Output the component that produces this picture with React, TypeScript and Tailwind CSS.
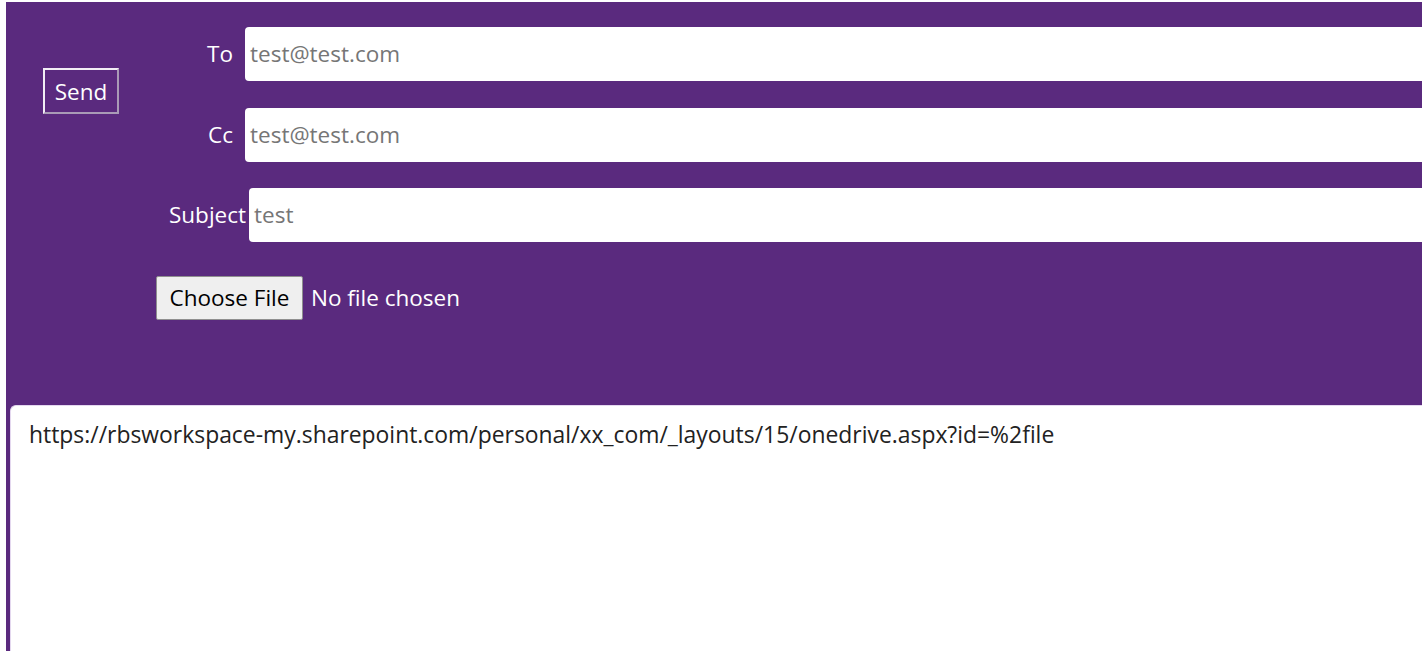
import React from "react";

export default function App() {
  const font = { fontFamily: '"Open Sans", "Noto Sans", sans-serif' };
  return (
    <div className="h-[651px] w-[1422px] overflow-hidden bg-white pl-[6px] pt-[2px]" style={font}>
      <div className="h-[700px] bg-[#5a2a7e] overflow-hidden">
        <div className="flex h-[403px]">
          <div className="w-[150px] shrink-0">
            <button className="ml-[37px] mt-[66px] flex h-[46px] w-[76px] items-center justify-center border-2 border-t-[#f2eef5] border-l-[#f2eef5] border-r-[#a99bb6] border-b-[#a99bb6] pt-[2px] text-[22.5px] leading-none text-white">
              Send
            </button>
          </div>
          <div className="flex flex-1 flex-col pt-[25px]">
            <div className="flex items-center">
              <div className="w-[77px] shrink-0 text-right text-[22.5px] text-white">To</div>
              <div className="ml-[12px] flex h-[54px] flex-1 items-center rounded-l-[4px] bg-white pl-[5px] text-[22.5px] text-[#767676]">
                test@test.com
              </div>
            </div>
            <div className="mt-[27px] flex items-center">
              <div className="w-[77px] shrink-0 text-right text-[22.5px] text-white">Cc</div>
              <div className="ml-[12px] flex h-[54px] flex-1 items-center rounded-l-[4px] bg-white pl-[5px] text-[22.5px] text-[#767676]">
                test@test.com
              </div>
            </div>
            <div className="mt-[26px] flex items-center">
              <div className="w-[90px] shrink-0 text-right text-[22.5px] text-white">Subject</div>
              <div className="ml-[3px] flex h-[54px] flex-1 items-center rounded-l-[4px] bg-white pl-[5px] text-[22.5px] text-[#767676]">
                test
              </div>
            </div>
            <div className="mt-[34px] flex items-center">
              <div className="flex h-[44px] w-[147px] items-center justify-center rounded-[2px] border border-[#8f8f8f] bg-[#efefef] text-[22.5px] text-black">
                Choose File
              </div>
              <div className="ml-[8px] text-[22.5px] text-white">No file chosen</div>
            </div>
          </div>
        </div>
        <div className="ml-[4px] h-[300px] rounded-tl-[6px] border border-r-0 border-[#e4d8ef] bg-white pl-[18px] pt-[12px] text-[22.9px] text-[#222222]">
          https://rbsworkspace-my.sharepoint.com/personal/xx_com/_layouts/15/onedrive.aspx?id=%2file
        </div>
      </div>
    </div>
  );
}
